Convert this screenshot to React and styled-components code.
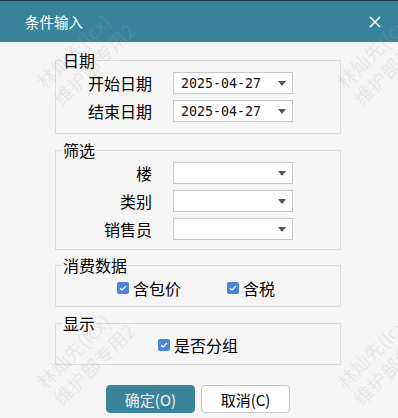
import React from "react";
import styled, { createGlobalStyle } from "styled-components";

const GlobalStyle = createGlobalStyle`
  html, body {
    margin: 0;
    padding: 0;
    background: #f5f5f5;
  }
  body {
    font-family: "Noto Sans CJK SC", "Noto Sans", sans-serif;
    color: #000;
  }
`;

const Dialog = styled.div`
  position: relative;
  width: 398px;
  height: 418px;
  overflow: hidden;
  background: #f5f5f5;
  display: flex;
  flex-direction: column;
`;

const TitleBar = styled.div`
  height: 41px;
  border-top: 1px solid #22363d;
  background: #3a849b;
  display: flex;
  align-items: center;
  justify-content: space-between;
  padding: 0 16px 0 25px;
  color: #fff;
  font-size: 14.5px;
`;

const Close = styled.button`
  width: 14px;
  height: 14px;
  padding: 0;
  border: 0;
  background: none;
  display: flex;
  align-items: center;
  justify-content: center;
  cursor: pointer;
`;

const Body = styled.div`
  display: flex;
  flex-direction: column;
  padding: 9px 57px 0 55px;
`;

const Group = styled.fieldset`
  margin: ${(p) => p.$mt || 0}px 0 0 0;
  padding: ${(p) => p.$pad};
  border: 1px solid #dcdcdc;
  min-width: 0;
`;

const Legend = styled.legend`
  margin-left: 6px;
  padding: 0 1px;
  font-size: 16px;
  line-height: 18px;
`;

const FieldGrid = styled.div`
  display: grid;
  grid-template-columns: 96px 120px;
  column-gap: 21px;
  row-gap: 6px;
  align-items: center;
`;

const Label = styled.div`
  text-align: right;
  font-size: 16px;
  line-height: 20px;
`;

const SelectBox = styled.div`
  box-sizing: border-box;
  height: 22px;
  border: 1px solid #c8c8c8;
  background: #fff;
  display: flex;
  align-items: center;
  justify-content: space-between;
  padding: 0 6px 0 7px;
  font-family: "DejaVu Sans Mono", "Liberation Mono", monospace;
  font-size: 13.3px;
  color: #111;
`;

const Caret = styled.span`
  margin-left: auto;
  width: 0;
  height: 0;
  border-left: 4px solid transparent;
  border-right: 4px solid transparent;
  border-top: 5px solid #4b5a53;
`;

const CheckRow = styled.div`
  display: flex;
  justify-content: center;
  align-items: center;
  gap: ${(p) => p.$gap || 0}px;
  padding-right: ${(p) => p.$shift || 0}px;
  height: 20px;
`;

const CheckItem = styled.label`
  display: flex;
  align-items: center;
  gap: 4px;
  font-size: 16px;
  line-height: 20px;
`;

const Box = styled.span`
  width: 12px;
  height: 12px;
  border-radius: 2px;
  background: #4a85d8;
  display: flex;
  align-items: center;
  justify-content: center;
`;

const Footer = styled.div`
  display: flex;
  justify-content: center;
  gap: 6px;
  margin-top: 20px;
  padding-right: 2px;
`;

const Button = styled.button`
  box-sizing: border-box;
  width: 89px;
  height: 28px;
  border-radius: 4px;
  border: 1px solid ${(p) => (p.$primary ? "#3a849b" : "#c8c8c8")};
  background: ${(p) => (p.$primary ? "#3a849b" : "#fff")};
  color: ${(p) => (p.$primary ? "#eef5f7" : "#000")};
  font-family: "Noto Sans CJK SC", "Noto Sans", sans-serif;
  font-size: 15px;
  padding: 0;
  cursor: pointer;
`;

const Watermark = styled.div`
  position: absolute;
  left: ${(p) => p.$x}px;
  top: ${(p) => p.$y}px;
  transform: rotate(-45deg);
  transform-origin: 0 0;
  font-size: 19px;
  line-height: 24px;
  color: rgba(170, 170, 170, 0.2);
  white-space: nowrap;
  pointer-events: none;
`;

const Select = ({ value }) => (
  <SelectBox>
    <span>{value}</span>
    <Caret />
  </SelectBox>
);

const Check = ({ children }) => (
  <CheckItem>
    <Box>
      <svg width="8" height="6" viewBox="0 0 8 6">
        <path d="M1 3.2 L3 5 L7 1" fill="none" stroke="#fff" strokeWidth="1.2" />
      </svg>
    </Box>
    {children}
  </CheckItem>
);

const marks = [
  [31, 76],
  [331, 76],
  [31, 376],
  [331, 376],
];

export default function App() {
  return (
    <Dialog>
      <GlobalStyle />
      <TitleBar>
        <span>条件输入</span>
        <Close aria-label="关闭">
          <svg width="12" height="12" viewBox="0 0 12 12">
            <path d="M1 1 L11 11 M11 1 L1 11" stroke="#fff" strokeWidth="1.5" />
          </svg>
        </Close>
      </TitleBar>
      <Body>
        <Group $pad="3px 0 11px 0">
          <Legend>日期</Legend>
          <FieldGrid>
            <Label>开始日期</Label>
            <Select value="2025-04-27" />
            <Label>结束日期</Label>
            <Select value="2025-04-27" />
          </FieldGrid>
        </Group>
        <Group $mt={7} $pad="3px 0 9px 0">
          <Legend>筛选</Legend>
          <FieldGrid>
            <Label>楼</Label>
            <Select value="" />
            <Label>类别</Label>
            <Select value="" />
            <Label>销售员</Label>
            <Select value="" />
          </FieldGrid>
        </Group>
        <Group $mt={6} $pad="4px 0 8px 0">
          <Legend>消费数据</Legend>
          <CheckRow $gap={46} $shift={4}>
            <Check>含包价</Check>
            <Check>含税</Check>
          </CheckRow>
        </Group>
        <Group $mt={7} $pad="3px 0 9px 0">
          <Legend>显示</Legend>
          <CheckRow>
            <Check>是否分组</Check>
          </CheckRow>
        </Group>
      </Body>
      <Footer>
        <Button $primary>确定(O)</Button>
        <Button>取消(C)</Button>
      </Footer>
      {marks.map(([x, y], i) => (
        <Watermark key={i} $x={x} $y={y}>
          <div>林灿先(lcx)</div>
          <div>维护部专用2</div>
        </Watermark>
      ))}
    </Dialog>
  );
}
